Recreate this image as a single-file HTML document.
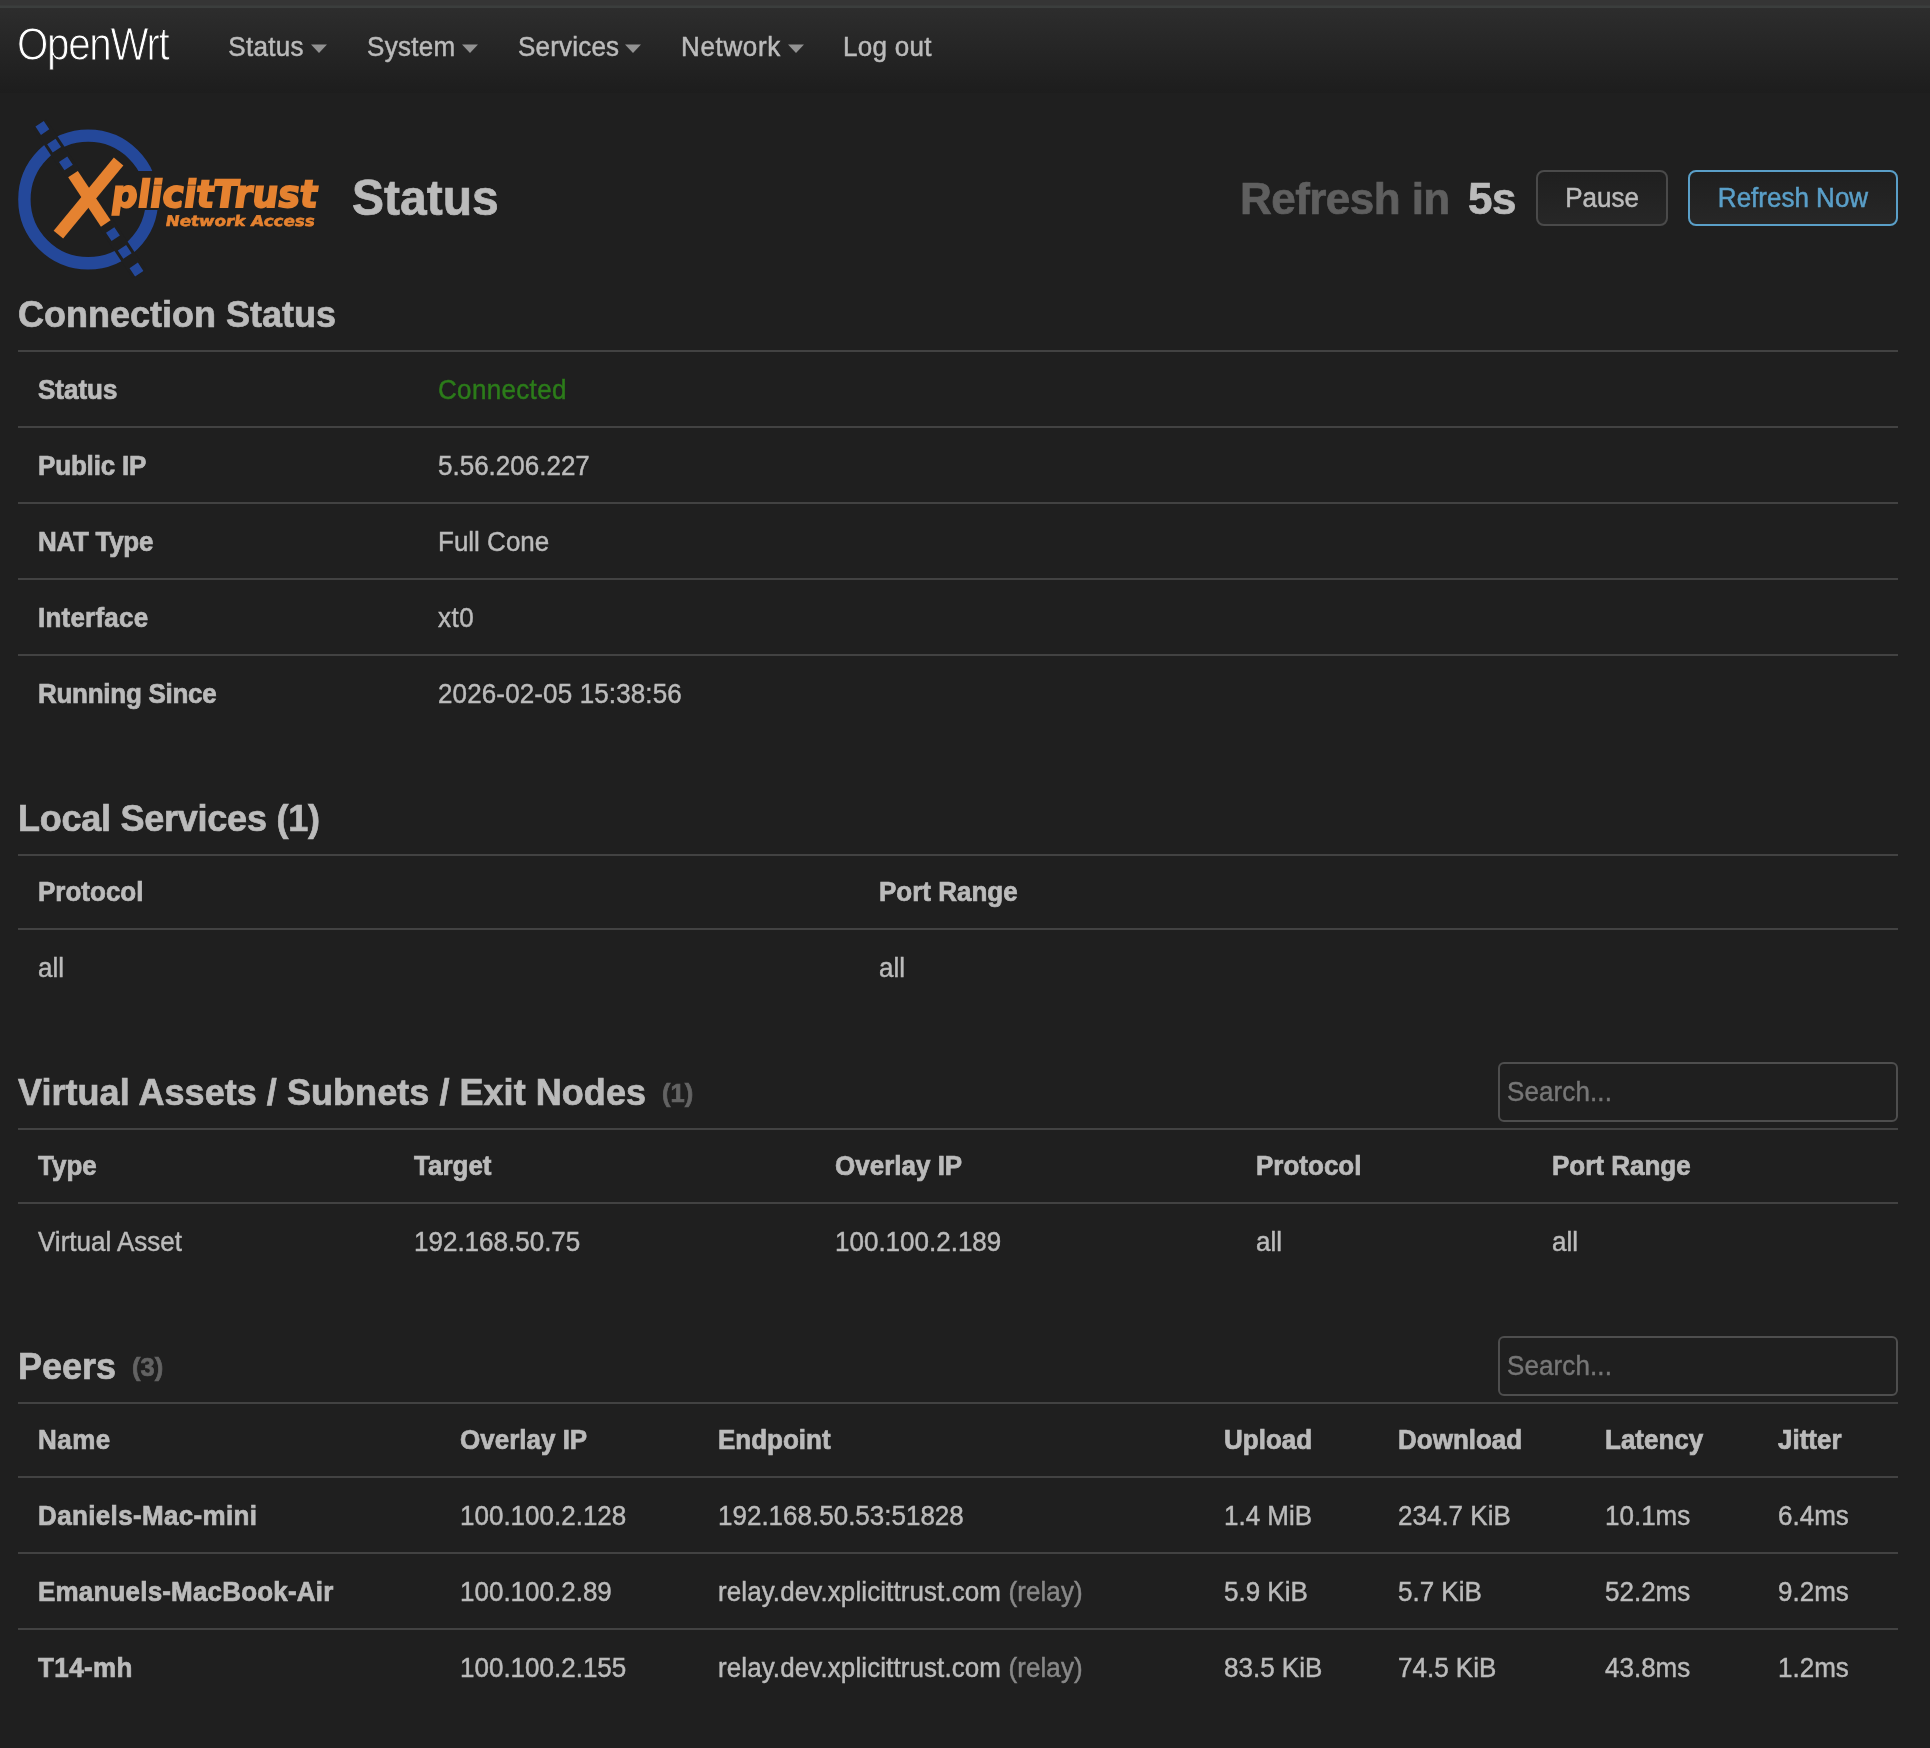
<!DOCTYPE html>
<html lang="en">
<head>
<meta charset="utf-8">
<title>OpenWrt - XplicitTrust Network Access - Status</title>
<style>
*{box-sizing:border-box;margin:0;padding:0}
html,body{width:1930px;height:1748px;overflow:hidden;background:#1f1f1f}
body{font-family:"Liberation Sans",Arial,Helvetica,sans-serif;font-size:26px;color:#bbb;position:relative}
.chrome{position:absolute;left:0;top:0;width:1930px;height:8px;background:linear-gradient(#353535 0,#353535 5px,#3b3e3d 6px,#3b3e3d 8px)}
header{will-change:transform;position:absolute;left:0;top:8px;width:1930px;height:85px;background:linear-gradient(#2d2d2d,#1d1d1d)}
.brand{position:absolute;left:16.6px;top:0;height:81px;line-height:72px;font-size:42px;color:#fff;letter-spacing:-1.35px;text-decoration:none;-webkit-text-stroke:.9px #272727;transform:translateY(1.5px) scale(.96,1.1);transform-origin:0 50%}
.nav{position:absolute;left:0;top:0;list-style:none}
.nav li{transform:scaleY(1.04);transform-origin:0 59%;position:absolute;top:.4px;height:81px;line-height:79px;font-size:26px;color:#bbb;white-space:nowrap;-webkit-text-stroke:.5px;letter-spacing:.2px}
.nav li .caret{display:inline-block;width:0;height:0;border-left:8px solid transparent;border-right:8px solid transparent;border-top:8px solid #929292;margin-left:7.5px;vertical-align:middle;position:relative;top:0}
#maincontent{position:absolute;left:18px;top:0;width:1880px;will-change:transform}
h2.title{transform:scaleY(1.04);transform-origin:0 13%;position:absolute;left:334px;top:170px;font-size:48px;line-height:56px;font-weight:bold;color:#bbb}
.refresh{position:absolute;top:171px;font-size:44px;line-height:56px;font-weight:bold;white-space:nowrap;letter-spacing:-.55px}
.btn{appearance:none;font-family:inherit;font-weight:normal;padding:0;margin:0;letter-spacing:0;-webkit-text-stroke:.5px;position:absolute;top:170px;height:56px;border:2px solid #4a4a4a;border-radius:8px;background:linear-gradient(#1f1f1f,#272727);color:#bbb;font-size:26px;line-height:52px;text-align:center;white-space:nowrap}
.btn.primary{border-color:#5a9fc8;color:#5a9fc8}
h3{transform:scaleY(1.035);transform-origin:0 62%;position:absolute;left:0;margin-top:1px;font-size:36px;line-height:44px;font-weight:bold;color:#bbb;white-space:nowrap}
h3 small{font-size:25.5px;font-weight:bold;color:#636363;margin-left:6px;position:relative;top:-3px;letter-spacing:0}
table{position:absolute;left:0;width:1880px;border-collapse:separate;border-spacing:0;table-layout:fixed}
tr.hd th{height:74px;padding-top:0}
td,th{height:76px;border-top:2px solid #424242;padding:2px 0 0 20px;text-align:left;vertical-align:middle;font-size:26px;line-height:30px;white-space:nowrap;color:#bbb}
th{font-weight:bold}
td{font-weight:normal;-webkit-text-stroke:.45px}
th,h2,h3,.refresh{-webkit-text-stroke:.7px}
.t{display:inline-block;transform:scaleY(1.05);transform-origin:0 79%}
.ok{color:#2c7c1a}
.dim{color:#888}
.search{position:absolute;left:1480px;width:400px;height:60px;border:2px solid #4e4e4e;border-radius:6px;background:#1f1f1f;color:#777;font-size:26px;line-height:56px;padding-left:7px;-webkit-text-stroke:.4px;letter-spacing:.1px}
</style>
</head>
<body>
<div class="chrome"></div>
<header>
  <a class="brand">OpenWrt</a>
  <ul class="nav">
    <li style="left:228.3px;letter-spacing:.3px">Status<span class="caret"></span></li>
    <li style="left:367px;letter-spacing:.3px">System<span class="caret" style="margin-left:6.8px"></span></li>
    <li style="left:518px">Services<span class="caret" style="margin-left:6px"></span></li>
    <li style="left:681px;letter-spacing:.65px">Network<span class="caret"></span></li>
    <li style="left:843px;letter-spacing:.3px">Log out</li>
  </ul>
</header>

<div id="maincontent">
  <svg id="logo" style="position:absolute;left:-18px;top:100px" width="360" height="200" viewBox="0 100 360 200" role="img" aria-label="XplicitTrust Network Access">
    <circle cx="88.2" cy="199.4" r="63.8" fill="none" stroke="#24489a" stroke-width="12.4"/>
    <rect x="128" y="171" width="40" height="39" fill="#1f1f1f"/>
    <line x1="39.6" y1="123.8" x2="139.3" y2="273.8" stroke="#1f1f1f" stroke-width="16"/>
    <line x1="39.6" y1="123.8" x2="139.3" y2="273.8" stroke="#24489a" stroke-width="10" stroke-dasharray="10 11.25"/>
    <line x1="58.4" y1="234.6" x2="118.6" y2="161.5" stroke="#e58230" stroke-width="12.3"/>
    <line x1="73" y1="174.1" x2="105.8" y2="223.5" stroke="#e58230" stroke-width="11.6"/>
    <text transform="translate(112.2,206.6) skewX(3)" textLength="205.6" lengthAdjust="spacingAndGlyphs" font-family="'DejaVu Sans','Liberation Sans',sans-serif" font-weight="bold" font-style="italic" font-size="37.5" fill="#e58230" stroke="#e58230" stroke-width="1.8" stroke-linejoin="miter" stroke-miterlimit="2">plicitTrust</text>
    <text transform="translate(166,225.8) skewX(3)" textLength="149" lengthAdjust="spacingAndGlyphs" font-family="'DejaVu Sans','Liberation Sans',sans-serif" font-weight="bold" font-style="italic" font-size="14.6" fill="#e58230" stroke="#e58230" stroke-width=".6" stroke-linejoin="miter" stroke-miterlimit="2">Network Access</text>
  </svg>
  <h2 class="title">Status</h2>
  <div class="refresh" style="left:1222px;color:#5f5f5f">Refresh in</div>
  <div class="refresh" style="left:1450px;color:#bbb">5s</div>
  <button type="button" class="btn" style="left:1518px;width:132px"><span class="t">Pause</span></button>
  <button type="button" class="btn primary" style="left:1670px;width:210px"><span class="t">Refresh Now</span></button>

  <h3 style="top:292px">Connection Status</h3>
  <table style="top:350px">
    <colgroup><col style="width:400px"><col></colgroup>
    <tr><th><span class="t">Status</span></th><td class="ok" style="letter-spacing:.33px"><span class="t">Connected</span></td></tr>
    <tr><th style="letter-spacing:-.17px"><span class="t">Public IP</span></th><td><span class="t">5.56.206.227</span></td></tr>
    <tr><th style="letter-spacing:-.3px"><span class="t">NAT Type</span></th><td><span class="t">Full Cone</span></td></tr>
    <tr><th style="letter-spacing:.22px"><span class="t">Interface</span></th><td style="letter-spacing:.5px"><span class="t">xt0</span></td></tr>
    <tr><th style="letter-spacing:-.27px"><span class="t">Running Since</span></th><td style="letter-spacing:.13px"><span class="t">2026-02-05 15:38:56</span></td></tr>
  </table>

  <h3 style="top:796px;letter-spacing:-.25px">Local Services (1)</h3>
  <table style="top:854px">
    <colgroup><col style="width:841px"><col></colgroup>
    <tr class="hd"><th><span class="t">Protocol</span></th><th><span class="t">Port Range</span></th></tr>
    <tr><td><span class="t">all</span></td><td><span class="t">all</span></td></tr>
  </table>

  <h3 style="top:1070px;letter-spacing:.05px">Virtual Assets / Subnets / Exit Nodes <small>(1)</small></h3>
  <div class="search" style="top:1062px"><span class="t">Search...</span></div>
  <table style="top:1128px">
    <colgroup><col style="width:376px"><col style="width:421px"><col style="width:421px"><col style="width:296px"><col></colgroup>
    <tr class="hd"><th><span class="t">Type</span></th><th><span class="t">Target</span></th><th><span class="t">Overlay IP</span></th><th><span class="t">Protocol</span></th><th><span class="t">Port Range</span></th></tr>
    <tr><td><span class="t">Virtual Asset</span></td><td><span class="t">192.168.50.75</span></td><td><span class="t">100.100.2.189</span></td><td><span class="t">all</span></td><td><span class="t">all</span></td></tr>
  </table>

  <h3 style="top:1344px">Peers <small>(3)</small></h3>
  <div class="search" style="top:1336px"><span class="t">Search...</span></div>
  <table style="top:1402px">
    <colgroup><col style="width:422px"><col style="width:258px"><col style="width:506px"><col style="width:174px"><col style="width:207px"><col style="width:173px"><col></colgroup>
    <tr class="hd"><th style="letter-spacing:.5px"><span class="t">Name</span></th><th><span class="t">Overlay IP</span></th><th><span class="t">Endpoint</span></th><th><span class="t">Upload</span></th><th><span class="t">Download</span></th><th><span class="t">Latency</span></th><th><span class="t">Jitter</span></th></tr>
    <tr><th style="letter-spacing:.35px"><span class="t">Daniels-Mac-mini</span></th><td><span class="t">100.100.2.128</span></td><td><span class="t">192.168.50.53:51828</span></td><td><span class="t">1.4 MiB</span></td><td><span class="t">234.7 KiB</span></td><td><span class="t">10.1ms</span></td><td><span class="t">6.4ms</span></td></tr>
    <tr><th style="letter-spacing:.18px"><span class="t">Emanuels-MacBook-Air</span></th><td><span class="t">100.100.2.89</span></td><td style="letter-spacing:.09px"><span class="t">relay.dev.xplicittrust.com <span class="dim">(relay)</span></span></td><td><span class="t">5.9 KiB</span></td><td><span class="t">5.7 KiB</span></td><td><span class="t">52.2ms</span></td><td><span class="t">9.2ms</span></td></tr>
    <tr><th style="letter-spacing:.4px"><span class="t">T14-mh</span></th><td><span class="t">100.100.2.155</span></td><td style="letter-spacing:.09px"><span class="t">relay.dev.xplicittrust.com <span class="dim">(relay)</span></span></td><td><span class="t">83.5 KiB</span></td><td><span class="t">74.5 KiB</span></td><td><span class="t">43.8ms</span></td><td><span class="t">1.2ms</span></td></tr>
  </table>
</div>
</body>
</html>
